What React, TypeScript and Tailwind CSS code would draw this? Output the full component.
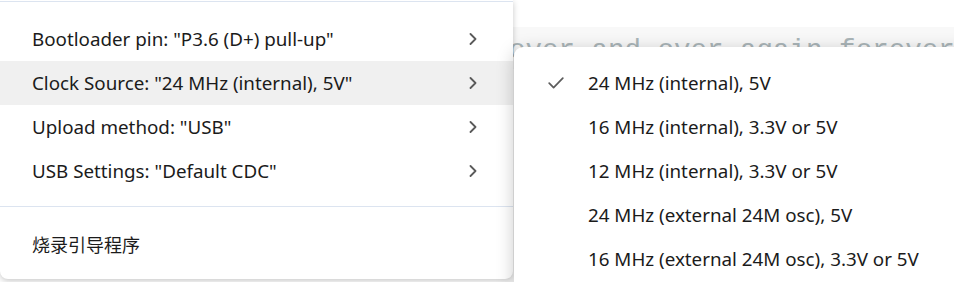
import React from "react";

const mainItems = [
  'Bootloader pin: "P3.6 (D+) pull-up"',
  'Clock Source: "24 MHz (internal), 5V"',
  'Upload method: "USB"',
  'USB Settings: "Default CDC"',
];

const clockOptions = [
  "24 MHz (internal), 5V",
  "16 MHz (internal), 3.3V or 5V",
  "12 MHz (internal), 3.3V or 5V",
  "24 MHz (external 24M osc), 5V",
  "16 MHz (external 24M osc), 3.3V or 5V",
];

function Chevron() {
  return (
    <svg width="8" height="12" viewBox="0 0 8 12" fill="none">
      <path d="M1.5 1 L6.5 6 L1.5 11" stroke="#5a5a5a" strokeWidth="1.8" strokeLinecap="round" strokeLinejoin="round" />
    </svg>
  );
}

function Tick() {
  return (
    <svg width="16" height="12" viewBox="0 0 16 12" fill="none">
      <path d="M1.2 6.2 L5.6 10.6 L14.8 1.2" stroke="#5c5c5c" strokeWidth="1.7" strokeLinecap="round" strokeLinejoin="round" />
    </svg>
  );
}

export default function App() {
  return (
    <div className="relative w-[954px] h-[282px] overflow-hidden bg-white font-['Noto_Sans','Noto_Sans_CJK_SC',sans-serif]">
      {/* Editor behind the menus */}
      <div className="pt-[27px]">
        <div className="h-[42px] bg-[#f8f8f8] pl-[80px] pt-[3px] font-['Liberation_Mono',monospace] text-[27.5px] leading-[42px] text-[#aab5b8] whitespace-nowrap">
          // the loop function runs over and over again forever
        </div>
      </div>

      {/* Main menu */}
      <div className="absolute left-0 top-0 w-[513px] h-[279px] rounded-b-[8px] bg-white shadow-[0_2px_6px_rgba(0,0,0,0.22)]">
        <div className="mt-[1px] h-px bg-[#dce4f0]" />
        <div className="pt-[15px]">
          {mainItems.map((label, i) => (
            <div
              key={label}
              className={
                i === 1
                  ? "flex h-[44px] items-center justify-between bg-[#f0f0f0] pl-[32px] pr-[36px] text-[18.8px] text-[#1b1b1b]"
                  : "flex h-[44px] items-center justify-between pl-[32px] pr-[36px] text-[18.8px] text-[#1b1b1b]"
              }
            >
              <span>{label}</span>
              <Chevron />
            </div>
          ))}
        </div>
        <div className="mt-[13px] h-px bg-[#dce4f0]" />
        <div className="mt-[15px] flex h-[44px] items-center pl-[32px] font-['Noto_Sans_CJK_SC',sans-serif] text-[18px] text-[#1b1b1b]">
          烧录引导程序
        </div>
      </div>

      {/* Clock source submenu */}
      <div className="absolute left-[514px] top-[47px] w-[470px] h-[260px] rounded-[9px] bg-white pt-[14px] shadow-[0_4px_18px_rgba(0,0,0,0.22)]">
        {clockOptions.map((label, i) => (
          <div key={label} className="flex h-[44px] items-center text-[18.8px] text-[#1b1b1b]">
            <div className="flex w-[74px] justify-start pl-[34px]">{i === 0 && <Tick />}</div>
            <span>{label}</span>
          </div>
        ))}
      </div>
    </div>
  );
}
